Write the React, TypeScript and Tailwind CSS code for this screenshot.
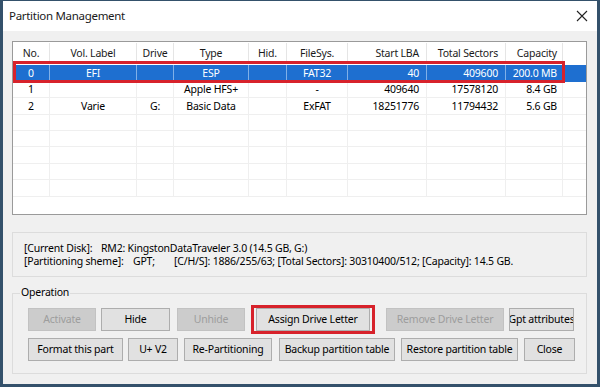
import React from "react";

type Row = string[];

const cols = [
  { name: "No.", w: "w-[37px]", align: "justify-center" },
  { name: "Vol. Label", w: "w-[87px]", align: "justify-center" },
  { name: "Drive", w: "w-[37px]", align: "justify-center" },
  { name: "Type", w: "w-[75px]", align: "justify-center" },
  { name: "Hid.", w: "w-[38px]", align: "justify-center" },
  { name: "FileSys.", w: "w-[61px]", align: "justify-center" },
  { name: "Start LBA", w: "w-[79px]", align: "justify-end pr-[7px]" },
  { name: "Total Sectors", w: "w-[79px]", align: "justify-end pr-[7px]" },
  { name: "Capacity", w: "w-[57px]", align: "justify-end pr-[5px]" },
];

const rows: Row[] = [
  ["0", "EFI", "", "ESP", "", "FAT32", "40", "409600", "200.0 MB"],
  ["1", "", "", "Apple HFS+", "", "-", "409640", "17578120", "8.4 GB"],
  ["2", "Varie", "G:", "Basic Data", "", "ExFAT", "18251776", "11794432", "5.6 GB"],
  [],
  [],
  [],
  [],
  [],
];

const rowHeights = ["h-[17px]", "h-[16px]", "h-[17px]", "h-[16px]", "h-[16px]", "h-[17px]", "h-[16px]", "h-[17px]"];

function Btn({
  label,
  w,
  disabled,
  className = "",
}: {
  label: string;
  w: string;
  disabled?: boolean;
  className?: string;
}) {
  return (
    <div
      className={`${w} ${className} h-[23px] flex items-center justify-center overflow-hidden whitespace-nowrap border ${
        disabled
          ? "bg-[#cccccc] border-[#c2c2c2] text-[#9d9d9d]"
          : "bg-[#e1e1e1] border-[#adadad] text-black"
      }`}
    >
      {label}
    </div>
  );
}

export default function App() {
  return (
    <div
      className="w-[600px] h-[387px] flex flex-col border-l-[3px] border-r-[3px] border-b-[3px] border-t border-[#34516b] text-[10.5px] tracking-[-0.2px] text-black whitespace-nowrap"
      style={{ fontFamily: '"Noto Sans", "Open Sans", sans-serif' }}
    >
      {/* title bar */}
      <div className="h-[30px] bg-white flex items-center justify-between pl-[6px] pr-[8px] shrink-0">
        <span className="text-[11.5px] tracking-[-0.3px] text-[#1a1a1a]">Partition Management</span>
        <svg width="12" height="12" viewBox="0 0 12 12" className="mr-[1px]">
          <path d="M1 1 L11 11 M11 1 L1 11" stroke="#222" strokeWidth="1.1" />
        </svg>
      </div>

      {/* body */}
      <div className="flex-1 bg-[#f0f0f0] pl-[9px] pr-[10px] pt-[10px] flex flex-col">
        {/* list */}
        <div className="relative w-[575px] h-[174px] border border-[#9a9a9a] bg-white overflow-hidden shrink-0">
          <div className="flex h-[23px]">
            {cols.map((c, i) => (
              <div
                key={i}
                className={`${c.w} ${c.align} flex items-center border-r border-[#e5e5e5] my-[1px] text-[#1a1a1a]`}
              >
                {c.name}
              </div>
            ))}
          </div>
          {rows.map((r, ri) => (
            <div
              key={ri}
              className={`flex ${rowHeights[ri]} border-b ${
                ri === 0 ? "bg-[#1e6fd0] text-white border-[#1e6fd0]" : "border-[#efefef]"
              }`}
            >
              {cols.map((c, ci) => (
                <div
                  key={ci}
                  className={`${c.w} ${c.align} flex items-center border-r leading-none ${
                    ri === 0 ? "border-[#7fb0e8]" : "border-[#efefef]"
                  }`}
                >
                  {r[ci] ?? ""}
                </div>
              ))}
            </div>
          ))}
          {/* red highlight around selected row */}
          <div className="absolute left-0 w-[552px] top-[19px] h-[22px] border-[3px] border-[#d7222b]" />
        </div>

        {/* disk info */}
        <div className="mt-[17px] w-[575px] h-[45px] border border-[#dcdcdc] pl-[11px] flex flex-col justify-center leading-[13px] shrink-0">
          <div className="flex">
            <span className="w-[77px] shrink-0">[Current Disk]:</span>
            <span>RM2: KingstonDataTraveler 3.0 (14.5 GB, G:)</span>
          </div>
          <div className="flex">
            <span className="w-[109px] shrink-0">[Partitioning sheme]:</span>
            <span className="w-[41px] shrink-0">GPT;</span>
            <span>[C/H/S]: 1886/255/63; [Total Sectors]: 30310400/512; [Capacity]: 14.5 GB.</span>
          </div>
        </div>

        {/* operation group */}
        <div className="relative mt-[16px] w-[575px] h-[81px] border border-[#dcdcdc] pl-[15px] pt-[14px] flex flex-col gap-[7px] shrink-0">
          <span className="absolute left-[7px] -top-[9px] bg-[#f0f0f0] px-[1px]">Operation</span>
          <div className="flex">
            <Btn label="Activate" w="w-[68px]" disabled />
            <Btn label="Hide" w="w-[69px]" className="ml-[5px]" />
            <Btn label="Unhide" w="w-[68px]" className="ml-[7px]" disabled />
            <div className="relative ml-[11px]">
              <Btn label="Assign Drive Letter" w="w-[114px]" />
              <div className="absolute -left-[5px] -right-[5px] -top-[3px] -bottom-[3px] border-[3px] border-[#d7222b]" />
            </div>
            <Btn label="Remove Drive Letter" w="w-[118px]" className="ml-[16px]" disabled />
            <Btn label="Gpt attributes" w="w-[65px]" className="ml-[5px]" />
          </div>
          <div className="flex">
            <Btn label="Format this part" w="w-[95px]" />
            <Btn label="U+ V2" w="w-[50px]" className="ml-[5px]" />
            <Btn label="Re-Partitioning" w="w-[88px]" className="ml-[6px]" />
            <Btn label="Backup partition table" w="w-[116px]" className="ml-[7px]" />
            <Btn label="Restore partition table" w="w-[117px]" className="ml-[6px]" />
            <Btn label="Close" w="w-[51px]" className="ml-[6px]" />
          </div>
        </div>
      </div>
    </div>
  );
}
